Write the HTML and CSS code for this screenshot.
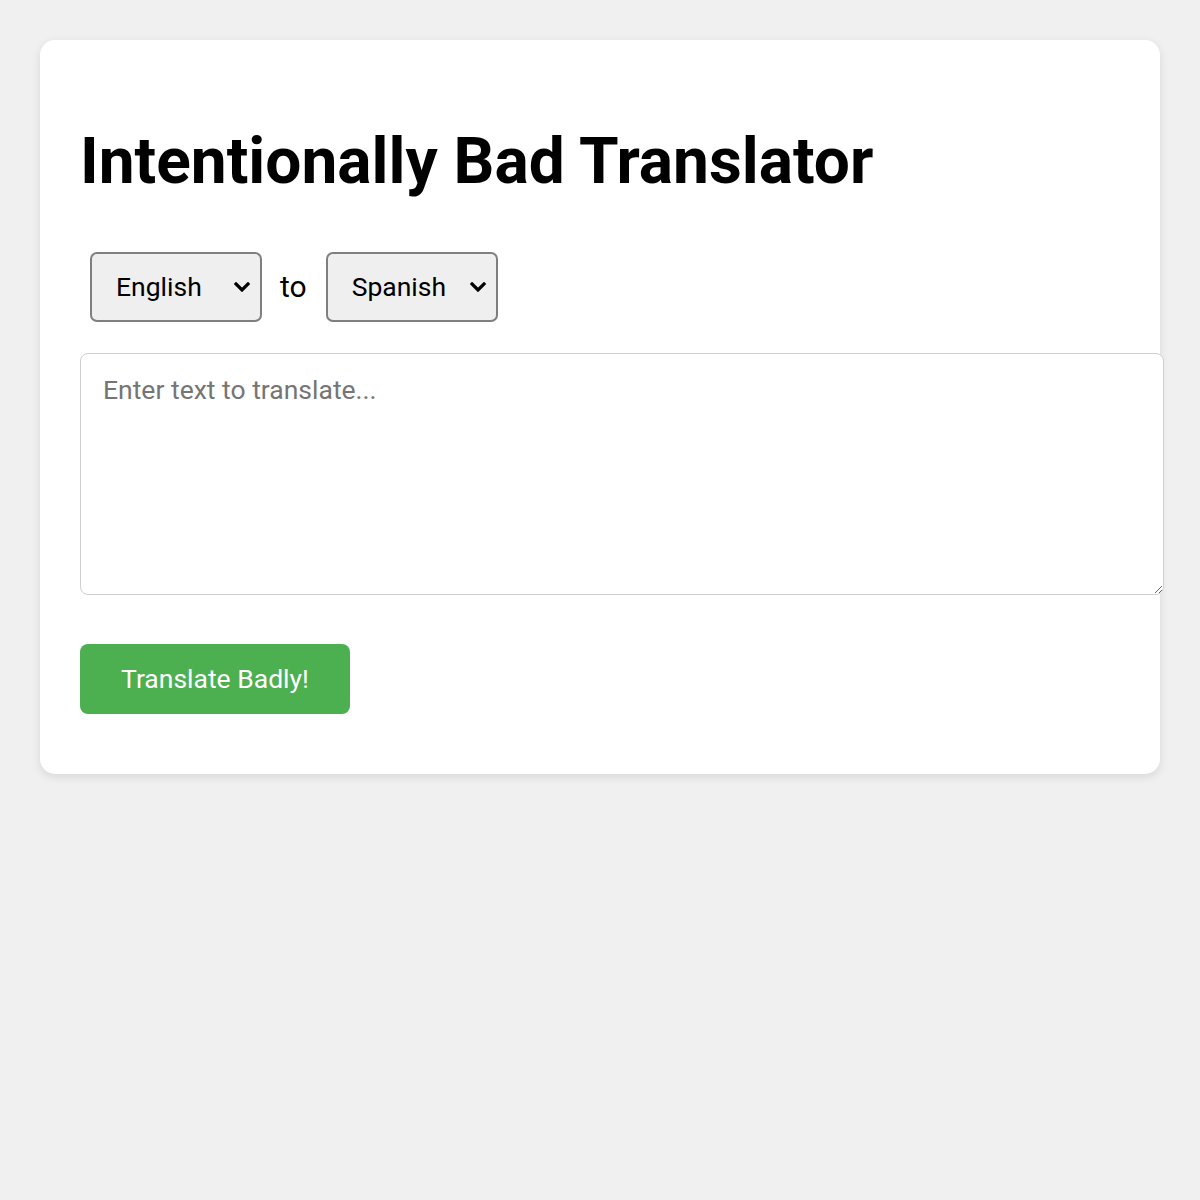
FILE: index.html
```html
<!DOCTYPE html>
<html lang="en">
<head>
<meta charset="utf-8">
<title>Intentionally Bad Translator</title>
<link rel="stylesheet" href="styles.css">
</head>
<body>
<div class="card">
  <h1 class="title">Intentionally Bad Translator</h1>
  <div class="lang-row">
    <select class="lang-select">
      <option>English</option>
      <option>Spanish</option>
    </select>
    <span class="to">to</span>
    <select class="lang-select">
      <option>Spanish</option>
      <option>English</option>
    </select>
  </div>
  <textarea class="input" placeholder="Enter text to translate..."></textarea>
  <button class="translate-btn">Translate Badly!</button>
</div>
</body>
</html>
```
FILE: styles.css
```css
html, body {
  margin: 0;
  padding: 0;
}
body {
  background: #f0f0f0;
  font-family: Roboto, "Liberation Sans", sans-serif;
  padding: 40px;
}
.card {
  background: #fff;
  border-radius: 15px;
  padding: 40px;
  box-shadow: 0 3px 10px rgba(0, 0, 0, 0.1);
}
.title {
  font-size: 64px;
  font-weight: 700;
  margin: 44px 0 51px;
  line-height: 1.2;
  color: #000;
}
.lang-row {
  display: flex;
  align-items: center;
  gap: 18px;
  margin-bottom: 31px;
}
.lang-select {
  -webkit-appearance: none;
  appearance: none;
  font-family: Roboto, "Liberation Sans", sans-serif;
  font-size: 26.5px;
  width: 172px;
  height: 70px;
  padding: 0 0 0 24px;
  border: 2px solid #7f7f7f;
  border-radius: 7px;
  background-color: #efefef;
  background-image: url("data:image/svg+xml;utf8,<svg xmlns='http://www.w3.org/2000/svg' width='16' height='10' viewBox='0 0 16 10'><path d='M2 2 L8 8 L14 2' fill='none' stroke='black' stroke-width='3.2' stroke-linecap='square'/></svg>");
  background-repeat: no-repeat;
  background-position: right 10px center;
  background-size: 16px 10px;
  color: #000;
  margin-left: 10px;
}
.lang-select + .to + .lang-select {
  margin-left: 0;
}
.to {
  font-size: 30px;
  margin-right: 1px;
}
.input {
  display: block;
  width: 100%;
  height: 200px;
  padding: 20px 20px 20px 22px;
  border: 1.5px solid #cfcfcf;
  border-radius: 8px;
  font-family: Roboto, "Liberation Sans", sans-serif;
  font-size: 26.5px;
  resize: vertical;
  margin-bottom: 49px;
}
.input::placeholder {
  color: #757575;
}
.translate-btn {
  display: block;
  width: 270px;
  height: 70px;
  background: #4caf50;
  color: #fff;
  border: none;
  border-radius: 8px;
  font-family: Roboto, "Liberation Sans", sans-serif;
  font-size: 26.5px;
  cursor: pointer;
  margin-bottom: 20px;
}
```
